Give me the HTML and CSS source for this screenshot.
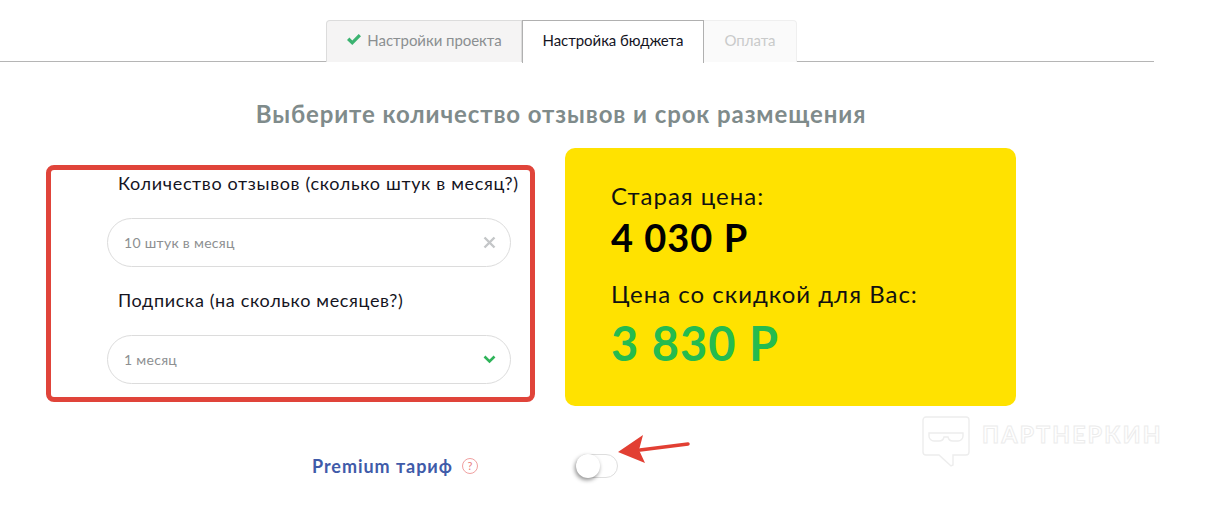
FILE: index.html
```html
<!DOCTYPE html>
<html lang="ru">
<head>
    <meta charset="UTF-8">
    <title>Настройка бюджета</title>
    <link rel="stylesheet" href="styles.css">
</head>
<body>

<div class="tabs">
    <div class="tab tab-done">
        <svg class="tab-check" width="16" height="13" viewBox="0 0 16 13"><path d="M1 7l2.4-2.4 2.9 2.9L12.7 1 15 3.3 6.3 12z" fill="#3cb371"/></svg>
        Настройки проекта
    </div>
    <div class="tab tab-active">Настройка бюджета</div>
    <div class="tab tab-off">Оплата</div>
</div>

<h2 class="title">Выберите количество отзывов и срок размещения</h2>

<div class="row">
    <div class="form-box">
        <label class="field-label">Количество отзывов (сколько штук в месяц?)</label>
        <div class="field">
            <span>10 штук в месяц</span>
            <svg width="13" height="13" viewBox="0 0 13 13"><path d="M1.5 1.5l10 10M11.5 1.5l-10 10" stroke="#c4c6c8" stroke-width="2.4" fill="none"/></svg>
        </div>
        <label class="field-label">Подписка (на сколько месяцев?)</label>
        <div class="field">
            <span>1 месяц</span>
            <svg width="13" height="9" viewBox="0 0 13 9"><path d="M1.5 1.5l5 5 5-5" stroke="#2fb45a" stroke-width="2.6" fill="none"/></svg>
        </div>
    </div>

    <div class="price-box">
        <div class="price-label">Старая цена:</div>
        <div class="price-old">4 030 Р</div>
        <div class="price-label price-label-new">Цена со скидкой для Вас:</div>
        <div class="price-new">3 830 Р</div>
    </div>
</div>

<div class="premium">
    <span class="premium-name">Premium тариф</span>
    <span class="premium-help">?</span>
    <span class="toggle"><span class="toggle-knob"></span></span>
</div>

<svg class="arrow" width="76" height="36" viewBox="0 0 76 36">
    <path d="M70 12L22 18" stroke="#e23f33" stroke-width="3.5" stroke-linecap="round" fill="none"/>
    <path d="M0 20L25 3 21 18 27 31z" fill="#e23f33"/>
</svg>

<div class="watermark">
    <svg width="48" height="52" viewBox="0 0 48 52" fill="none" stroke="#ededed" stroke-width="1.4">
        <path d="M4 1h40a3 3 0 0 1 3 3v32a3 3 0 0 1-3 3H31v10l-2 1-12-11H4a3 3 0 0 1-3-3V4a3 3 0 0 1 3-3z"/>
        <path d="M7 17h34v3a5 5 0 0 1-5 5h-5a5 5 0 0 1-5-4h-4a5 5 0 0 1-5 4h-5a5 5 0 0 1-5-5z"/>
    </svg>
    <span class="watermark-text">ПАРТНЕРКИН</span>
</div>

</body>
</html>
```

FILE: styles.css
```css
body { margin: 0; font-family: Lato, "Noto Sans", sans-serif; color: #111; background: #fff; position: relative; height: 519px; overflow: hidden; }

.tabs { display: flex; width: 828px; height: 41px; padding: 20px 0 0 326px; border-bottom: 1px solid #b5b5b5; }
.tab { height: 37px; padding-bottom: 4px; display: flex; align-items: center; justify-content: center; font-size: 15px; letter-spacing: -0.05px; border: 1px solid #e4e4e4; border-bottom: none; }
.tab-done { width: 194px; background: #f5f4f4; color: #8b8f91; border-radius: 4px 0 0 0; border-color: #dcdcdc; gap: 5px; }
.tab-active { width: 180px; height: 38px; background: #fff; color: #15151f; border: 1px solid #b0b0b0; border-bottom: none; position: relative; z-index: 1; }
.tab-off { width: 92px; background: #fafafa; color: #c9caca; border-left: none; border-radius: 0 4px 0 0; border-color: #efefef; }

.title { width: 1122px; margin: 38px 0 0; text-align: center; font-size: 24px; line-height: 28px; font-weight: 700; letter-spacing: 0.9px; color: #7f8b8b; }

.row { display: flex; align-items: flex-start; gap: 30px; margin: 20px 0 0 46px; }

.form-box { box-sizing: border-box; width: 489px; height: 237px; margin-top: 17px; padding: 2px 0 0 56px; border: 5px solid #e0443a; border-radius: 8px; }
.field-label { display: block; margin-left: 11px; font-size: 18px; line-height: 22px; letter-spacing: 0.65px; color: #15151f; }
.field { box-sizing: border-box; width: 404px; height: 49px; margin: 24px 0 22px; padding: 0 14px 1px 16px; display: flex; align-items: center; justify-content: space-between; border: 1px solid #dcdcdc; border-radius: 25px; font-size: 14px; letter-spacing: 0.3px; color: #8d8f91; }

.price-box { box-sizing: border-box; width: 451px; height: 258px; padding: 35px 0 0 46px; background: #ffe200; border-radius: 10px; color: #111; }
.price-label { font-size: 24px; line-height: 26px; letter-spacing: 1px; }
.price-label-new { margin-top: 23px; }
.price-old { margin-top: 7px; font-size: 38px; line-height: 42px; font-weight: 700; letter-spacing: 1px; color: #000; }
.price-new { margin-top: 9px; font-size: 47px; line-height: 54px; font-weight: 700; letter-spacing: 1px; color: #25bb4f; }

.premium { display: flex; align-items: center; margin: 47px 0 0 312px; height: 26px; }
.premium-name { width: 150px; font-size: 18px; font-weight: 700; letter-spacing: 0.95px; color: #3f5ba9; }
.premium-help { box-sizing: border-box; width: 16px; height: 16px; border: 1px solid #f0a0a0; border-radius: 50%; font-size: 11px; line-height: 14px; text-align: center; color: #e98080; }
.toggle { box-sizing: border-box; width: 42px; height: 24px; margin-left: 98px; border: 1px solid #dedede; border-radius: 12px; display: block; position: relative; }
.toggle-knob { position: absolute; left: -1px; top: -1px; width: 24px; height: 24px; border-radius: 50%; background: #fff; box-shadow: -1px 2px 4px rgba(0,0,0,0.45); }

.arrow { position: absolute; left: 618px; top: 432px; }

.watermark { position: absolute; left: 922px; top: 416px; display: flex; align-items: center; gap: 12px; }
.watermark-text { font-size: 23px; font-weight: 700; letter-spacing: 2.3px; color: #fff; -webkit-text-stroke: 1px #ececec; margin-bottom: 16px; }
```
